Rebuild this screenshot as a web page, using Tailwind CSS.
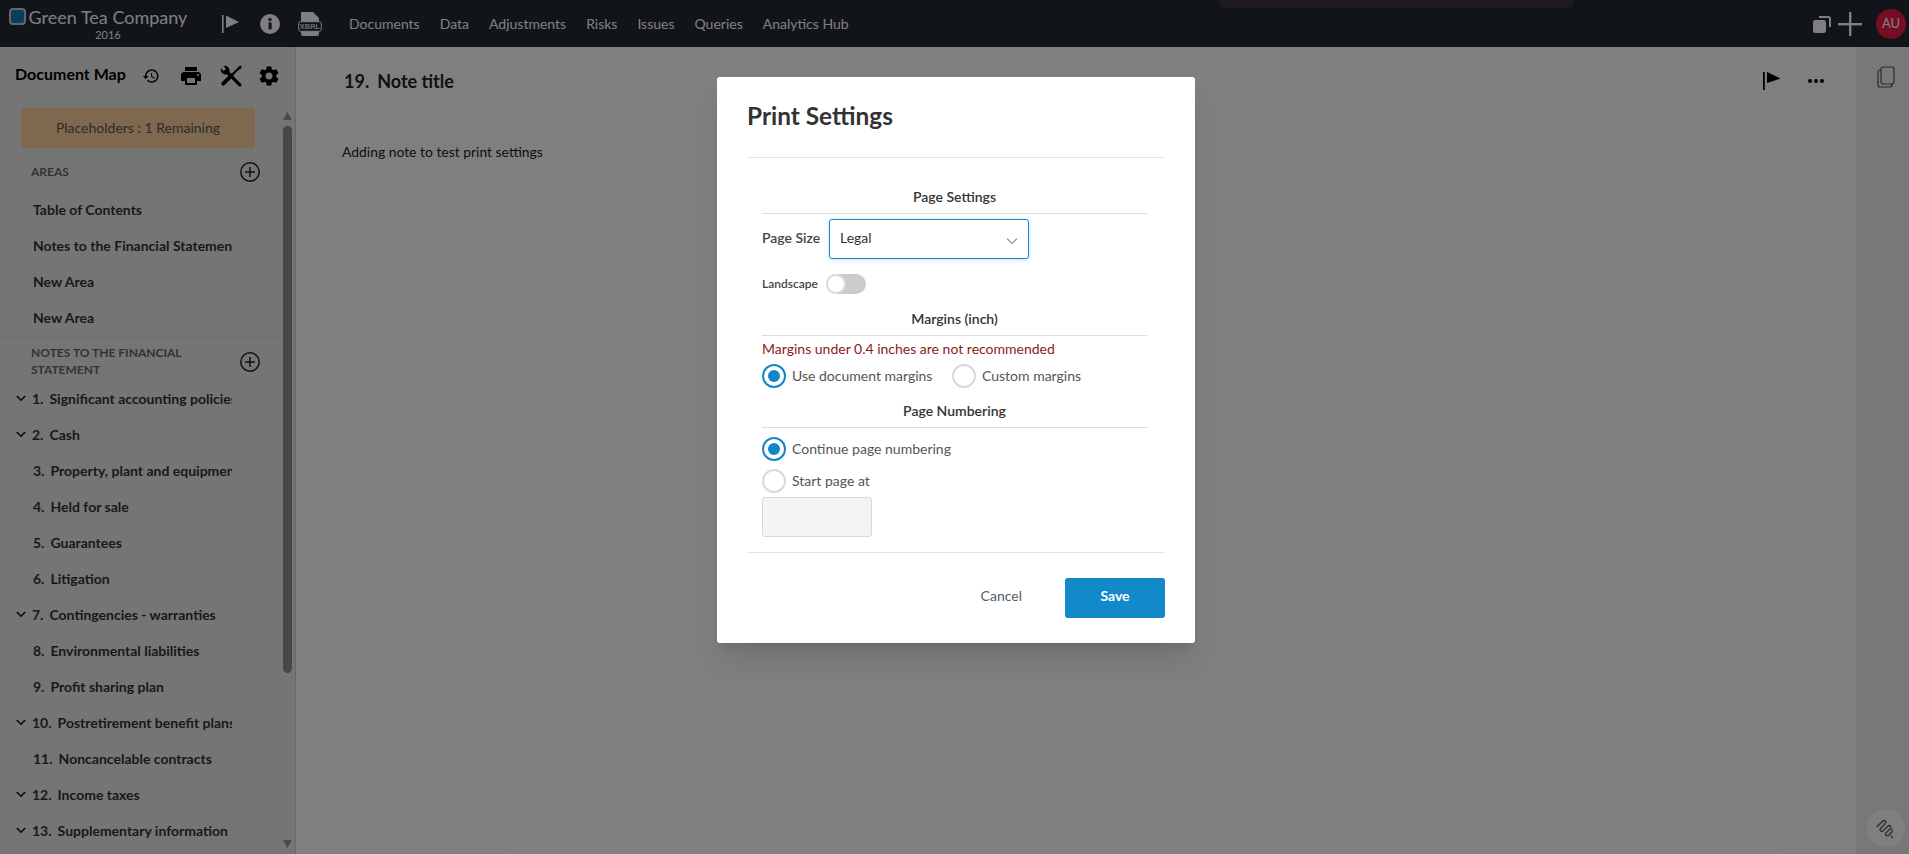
<!DOCTYPE html>
<html lang="en">
<head>
    <meta charset="UTF-8">
    <title>Print Settings</title>
    <script src="https://cdn.jsdelivr.net/npm/@tailwindcss/browser@4"></script>
</head>
<body class="relative h-[854px] w-full overflow-hidden bg-white font-[Lato,sans-serif] text-[#222]">
    <!-- Top bar -->
    <header class="flex h-[47px] items-center bg-[#222832] text-white">
        <div class="mt-2 ml-[9px] h-[17px] w-[17px] shrink-0 self-start rounded-[4px] border-2 border-[#c8ccd0] bg-[#0e80bc]"></div>
        <div class="mt-[7px] ml-[3px] flex w-[158px] shrink-0 flex-col items-center self-start">
            <span class="text-[18px] leading-[20px] whitespace-nowrap">Green Tea Company</span>
            <span class="mt-[2px] text-[11px] leading-[12px]">2016</span>
        </div>
        <svg class="ml-[34px] h-5 w-5" viewBox="0 0 20 20" fill="currentColor"><rect x="1" y="1" width="1.600" height="18"/><path d="M5 1.500 18 8 5 14z"/></svg>
        <svg class="ml-[19px] h-5 w-5" viewBox="0 0 20 20"><circle cx="10" cy="10" r="10" fill="#fff"/><rect x="8.600" y="8.400" width="3" height="7" fill="#222832"/><circle cx="10" cy="5.600" r="1.700" fill="#222832"/></svg>
        <svg class="ml-[18px] h-[26px] w-[24px]" viewBox="0 0 24 26"><path d="M3 1h12l6 6v4H3zM3 20h18v3a2 2 0 0 1-2 2H5a2 2 0 0 1-2-2z" fill="#fff"/><rect x="0.700" y="10.700" width="22.600" height="9.600" rx="2" fill="#222832" stroke="#fff" stroke-width="1"/><text x="12" y="18.200" text-anchor="middle" font-family="Liberation Sans" font-size="7.500" font-weight="700" fill="#cfe3f5">XBRL</text></svg>
        <nav class="ml-[27px] flex gap-[20px] text-[14px] whitespace-nowrap">
            <a>Documents</a><a>Data</a><a>Adjustments</a><a>Risks</a><a>Issues</a><a>Queries</a><a>Analytics Hub</a>
        </nav>
        <div class="ml-auto flex items-center">
            <svg class="h-[18px] w-[18px]" viewBox="0 0 18 18" fill="#fff"><rect x="0" y="5" width="13" height="13" rx="2.500"/><path d="M6 1h9a3 3 0 0 1 3 3v8h-2V4a1 1 0 0 0-1-1H6z"/></svg>
            <svg class="ml-[7px] h-[24px] w-[24px]" viewBox="0 0 24 24" fill="#fff"><rect x="11" y="0" width="2.400" height="24"/><rect x="0" y="11" width="24" height="2.400"/></svg>
            <div class="mr-[3px] ml-[14px] flex h-[30px] w-[30px] items-center justify-center rounded-full bg-[#e81c44] text-[13px]">AU</div>
        </div>
    </header>

    <div class="flex h-[807px]">
        <!-- Document map -->
        <aside class="flex w-[296px] shrink-0 flex-col border-r border-[#d0d0d0] bg-[#ebebeb]">
            <div class="flex h-[54px] items-center pl-[15px] text-black">
                <h2 class="w-[127px] text-[16px] font-bold whitespace-nowrap">Document Map</h2>
                <svg class="mt-[3px] h-[18px] w-[18px]" viewBox="0 0 24 24" fill="currentColor"><path d="M13 3c-4.970 0-9 4.030-9 9H1l3.890 3.890.07.140L9 12H6c0-3.870 3.130-7 7-7s7 3.130 7 7-3.130 7-7 7c-1.930 0-3.680-.79-4.940-2.060l-1.420 1.420C8.270 19.990 10.510 21 13 21c4.970 0 9-4.030 9-9s-4.030-9-9-9zm-1 5v5l4.280 2.540.72-1.210-3.500-2.080V8H12z"/></svg>
                <svg class="mt-[3px] ml-[19px] h-6 w-6" viewBox="0 0 24 24" fill="currentColor"><path d="M19 8H5c-1.660 0-3 1.340-3 3v6h4v4h12v-4h4v-6c0-1.660-1.340-3-3-3zm-3 11H8v-5h8v5zm3-7c-.55 0-1-.45-1-1s.45-1 1-1 1 .45 1 1-.45 1-1 1zm-1-9H6v4h12V3z"/></svg>
                <svg class="mt-[3px] ml-[17px] h-[22px] w-[22px]" viewBox="0 0 20 20" fill="none" stroke="currentColor" stroke-linecap="round"><path d="M.8 3 3.500 5.500 5.500 3.500 3 .8A4.600 4.600 0 0 1 8.500 6.500L6.500 8.500A4.600 4.600 0 0 1 .8 3z" fill="currentColor" stroke="none"/><path d="M6.500 6.500 18 18" stroke-width="3"/><path d="M10.500 9.500 3 17" stroke-width="3.600"/><path d="M10 10 17 3" stroke-width="2"/><path d="M16.500 1.500 19 .5l.5 1.500-1.500 2.500z" fill="currentColor" stroke="none"/></svg>
                <svg class="mt-[3px] ml-[15px] h-6 w-6" viewBox="0 0 24 24" fill="currentColor"><path d="M19.140 12.940c.04-.3.06-.61.06-.94 0-.32-.02-.64-.07-.94l2.030-1.580c.18-.14.23-.41.12-.61l-1.920-3.320c-.12-.22-.37-.29-.59-.22l-2.390.96c-.5-.38-1.030-.7-1.620-.94l-.36-2.540c-.04-.24-.24-.41-.48-.41h-3.840c-.24 0-.43.17-.47.41l-.36 2.540c-.59.24-1.130.57-1.620.94l-2.390-.96c-.22-.08-.47 0-.59.22L2.740 8.870c-.12.21-.08.47.12.61l2.030 1.580c-.05.3-.09.63-.09.94s.02.64.07.94l-2.030 1.580c-.18.14-.23.41-.12.61l1.920 3.320c.12.22.37.29.59.22l2.390-.96c.5.38 1.030.7 1.620.94l.36 2.540c.05.24.24.41.48.41h3.840c.24 0 .44-.17.47-.41l.36-2.540c.59-.24 1.130-.56 1.620-.94l2.390.96c.22.08.47 0 .59-.22l1.920-3.320c.12-.22.07-.47-.12-.61l-2.010-1.580zM12 15.600c-1.980 0-3.600-1.620-3.600-3.600s1.620-3.600 3.600-3.600 3.600 1.620 3.600 3.600-1.620 3.600-3.600 3.600z"/></svg>
            </div>
            <div class="flex min-h-0 flex-1">
                <div class="w-[283px] shrink-0">
                    <div class="mt-[7px] ml-[21px] flex h-10 w-[234px] items-center justify-center rounded-[3px] bg-[#ffd39d] pb-[2px] text-[14px] text-[#555]">Placeholders : 1 Remaining</div>
                    <div class="flex h-[43px] items-center justify-between pt-[5px] pr-[23px] pl-[31px]">
                        <span class="text-[12px] font-bold text-[#666]">AREAS</span>
                        <svg class="h-5 w-5" viewBox="0 0 20 20" fill="none" stroke="#222" stroke-width="1.500"><circle cx="10" cy="10" r="9.200"/><path d="M10 5v10M5 10h10"/></svg>
                    </div>
                    <div class="w-[232px] overflow-hidden pl-[33px] text-[14px] font-bold whitespace-nowrap text-[#333]">
                        <div class="flex h-9 items-center">Table of Contents</div>
                        <div class="flex h-9 items-center">Notes to the Financial Statements</div>
                        <div class="flex h-9 items-center">New Area</div>
                        <div class="flex h-9 items-center">New Area</div>
                    </div>
                    <div class="mt-[2px] flex h-[45px] items-center justify-between border-t border-[#d8d8d8] pt-[2px] pr-[23px] pl-[31px]">
                        <span class="w-[170px] text-[12px] leading-[17px] font-bold text-[#666]">NOTES TO THE FINANCIAL STATEMENT</span>
                        <svg class="mt-[2px] h-5 w-5" viewBox="0 0 20 20" fill="none" stroke="#222" stroke-width="1.500"><circle cx="10" cy="10" r="9.200"/><path d="M10 5v10M5 10h10"/></svg>
                    </div>
                    <ul class="-mt-[2px] w-[232px] overflow-hidden text-[14px] font-bold whitespace-nowrap text-[#333]">
                        <li class="flex h-9 items-center pl-4"><svg class="mr-[6px] h-[10px] w-[10px] shrink-0" viewBox="0 0 10 10" fill="none" stroke="#111" stroke-width="1.600"><path d="M.8 3l4.200 4.200L9.200 3"/></svg><span class="mr-[6px]">1.</span>Significant accounting policies</li>
                        <li class="flex h-9 items-center pl-4"><svg class="mr-[6px] h-[10px] w-[10px] shrink-0" viewBox="0 0 10 10" fill="none" stroke="#111" stroke-width="1.600"><path d="M.8 3l4.200 4.200L9.200 3"/></svg><span class="mr-[6px]">2.</span>Cash</li>
                        <li class="flex h-9 items-center pl-[33px]"><span class="mr-[6px]">3.</span>Property, plant and equipment</li>
                        <li class="flex h-9 items-center pl-[33px]"><span class="mr-[6px]">4.</span>Held for sale</li>
                        <li class="flex h-9 items-center pl-[33px]"><span class="mr-[6px]">5.</span>Guarantees</li>
                        <li class="flex h-9 items-center pl-[33px]"><span class="mr-[6px]">6.</span>Litigation</li>
                        <li class="flex h-9 items-center pl-4"><svg class="mr-[6px] h-[10px] w-[10px] shrink-0" viewBox="0 0 10 10" fill="none" stroke="#111" stroke-width="1.600"><path d="M.8 3l4.200 4.200L9.200 3"/></svg><span class="mr-[6px]">7.</span>Contingencies - warranties</li>
                        <li class="flex h-9 items-center pl-[33px]"><span class="mr-[6px]">8.</span>Environmental liabilities</li>
                        <li class="flex h-9 items-center pl-[33px]"><span class="mr-[6px]">9.</span>Profit sharing plan</li>
                        <li class="flex h-9 items-center pl-4"><svg class="mr-[6px] h-[10px] w-[10px] shrink-0" viewBox="0 0 10 10" fill="none" stroke="#111" stroke-width="1.600"><path d="M.8 3l4.200 4.200L9.200 3"/></svg><span class="mr-[6px]">10.</span>Postretirement benefit plans</li>
                        <li class="flex h-9 items-center pl-[33px]"><span class="mr-[6px]">11.</span>Noncancelable contracts</li>
                        <li class="flex h-9 items-center pl-4"><svg class="mr-[6px] h-[10px] w-[10px] shrink-0" viewBox="0 0 10 10" fill="none" stroke="#111" stroke-width="1.600"><path d="M.8 3l4.200 4.200L9.200 3"/></svg><span class="mr-[6px]">12.</span>Income taxes</li>
                        <li class="flex h-9 items-center pl-4"><svg class="mr-[6px] h-[10px] w-[10px] shrink-0" viewBox="0 0 10 10" fill="none" stroke="#111" stroke-width="1.600"><path d="M.8 3l4.200 4.200L9.200 3"/></svg><span class="mr-[6px]">13.</span>Supplementary information</li>
                    </ul>
                </div>
                <!-- scrollbar -->
                <div class="flex w-[9px] flex-col items-center">
                    <svg class="mt-[11px] h-2 w-[9px]" viewBox="0 0 9 8" fill="#999"><path d="M4.500 0 9 8H0z"/></svg>
                    <div class="mt-[6px] h-[547px] w-[9px] rounded-full bg-[#8e8e8e]"></div>
                    <svg class="mt-[167px] h-2 w-[9px]" viewBox="0 0 9 8" fill="#999"><path d="M0 0h9L4.500 8z"/></svg>
                </div>
            </div>
        </aside>

        <!-- Note -->
        <main class="flex-1 pr-[32px] pl-[46px]">
            <div class="flex h-[68px] items-center">
                <h1 class="ml-[2px] flex text-[18px] font-bold"><span class="mr-[8px]">19.</span>Note title</h1>
                <svg class="ml-auto h-5 w-5" viewBox="0 0 20 20" fill="#000"><rect x="1" y="1" width="1.800" height="18"/><path d="M5 1 18.500 7.500 5 12z"/></svg>
                <div class="ml-[26px] flex gap-[2px]">
                    <span class="h-1 w-1 rounded-full bg-black"></span><span class="h-1 w-1 rounded-full bg-black"></span><span class="h-1 w-1 rounded-full bg-black"></span>
                </div>
            </div>
            <p class="mt-[27px] text-[13.900px]">Adding note to test print settings</p>
        </main>

        <!-- Right rail -->
        <div class="w-[53px] shrink-0 bg-[#f0f0f0]">
            <svg class="mt-[19px] ml-[21px] h-[22px] w-[18px]" viewBox="0 0 18 22" fill="none" stroke="#555" stroke-width="1.200"><rect x="4" y="1" width="13" height="17" rx="2.500"/><path d="M4 4H3a2 2 0 0 0-2 2v13a2 2 0 0 0 2 2h10a2 2 0 0 0 2-2v-1"/></svg>
        </div>
    </div>

    <!-- Notification behind the overlay -->
    <div class="absolute top-0 left-[1220px] h-2 w-[354px] rounded-b-[6px] bg-[#3c363f] shadow-lg"></div>
    <!-- Floating help button -->
    <div class="absolute top-[809px] left-[1867px] flex h-[38px] w-[38px] items-center justify-center rounded-full bg-white">
        <svg class="h-6 w-6" viewBox="0 0 24 24" fill="none" stroke="#555" stroke-width="1.300" stroke-linecap="round" stroke-linejoin="round"><path d="M3 10.500 9 5a1.700 1.700 0 0 1 2.400 2.400L6.500 12.500a1.700 1.700 0 0 0 2.400 2.400L14 10a1.700 1.700 0 0 1 2.400 2.400L12 17a1.700 1.700 0 0 0 2.400 2.400l3.500-3.400a1.500 1.500 0 0 0-.4-2.500M17 20l1.500 1.500"/></svg>
    </div>

    <!-- Modal overlay -->
    <div class="absolute inset-0 flex justify-center bg-black/50 pt-[77px]">
        <div class="ml-[3px] h-[566px] w-[478px] rounded-[3px] bg-white px-[30px] text-[14px] text-[#333] shadow-xl">
            <div class="flex h-[81px] items-start border-b border-[#e2e2e2] pt-[23px]">
                <h3 class="text-[24.400px] leading-[32px] font-bold">Print Settings</h3>
            </div>
            <div class="pr-[18px] pl-[15px]">
                <h4 class="mt-[29px] border-b border-[#dcdcdc] pb-[6px] text-center leading-[20px] font-semibold">Page Settings</h4>
                <div class="mt-[5px] flex items-center">
                    <label class="w-[67px] pb-[3px] font-semibold text-[#444]">Page Size</label>
                    <div class="flex h-10 w-[200px] items-center justify-between rounded-[3px] border border-[#1186c8] pr-[10px] pb-[3px] pl-[10px] shadow-[0_1px_4px_rgba(17,134,200,0.25)]">
                        <span>Legal</span>
                        <svg class="mt-[6px] h-[10px] w-[12px]" viewBox="0 0 12 10" fill="none" stroke="#999" stroke-width="1.200"><path d="M1 2.500l5 5 5-5"/></svg>
                    </div>
                </div>
                <div class="mt-[15px] flex h-5 items-center">
                    <span class="w-[64px] pb-px text-[12px] font-semibold text-[#444]">Landscape</span>
                    <span class="flex h-5 w-10 items-center rounded-full bg-[#cccccc]"><span class="h-5 w-5 rounded-full border-2 border-[#dddddd] bg-white"></span></span>
                </div>
                <h4 class="mt-[15px] border-b border-[#dcdcdc] pb-[6px] text-center leading-[20px] font-semibold">Margins (inch)</h4>
                <p class="mt-[3px] leading-[20px] text-[#8a1c1c]">Margins under 0.4 inches are not recommended</p>
                <div class="mt-[5px] flex h-6 items-center">
                    <span class="flex h-6 w-6 items-center justify-center rounded-full border-2 border-[#1186c8]"><span class="h-3 w-3 rounded-full bg-[#1186c8]"></span></span>
                    <span class="ml-[6px] w-[160px] pb-[2px] text-[#555]">Use document margins</span>
                    <span class="h-6 w-6 rounded-full border-2 border-[#d5dae0]"></span>
                    <span class="ml-[6px] pb-[2px] text-[#555]">Custom margins</span>
                </div>
                <h4 class="mt-[13px] border-b border-[#dcdcdc] pb-[6px] text-center leading-[20px] font-semibold">Page Numbering</h4>
                <div class="mt-[9px] flex h-6 items-center">
                    <span class="flex h-6 w-6 items-center justify-center rounded-full border-2 border-[#1186c8]"><span class="h-3 w-3 rounded-full bg-[#1186c8]"></span></span>
                    <span class="ml-[6px] pb-[2px] text-[#555]">Continue page numbering</span>
                </div>
                <div class="mt-[8px] flex h-6 items-center">
                    <span class="h-6 w-6 rounded-full border-2 border-[#d5dae0]"></span>
                    <span class="ml-[6px] pb-[2px] text-[#555]">Start page at</span>
                </div>
                <div class="mt-[4px] h-10 w-[110px] rounded-[3px] border border-[#d5d8dc] bg-[#f4f4f4]"></div>
            </div>
            <div class="mt-[15px] flex items-center justify-end border-t border-[#e2e2e2] pt-[25px]">
                <button class="mr-[43px] pb-[6px] text-[#55606a]">Cancel</button>
                <button class="h-10 w-[100px] rounded-[3px] bg-[#1289c9] pb-[6px] font-bold text-white">Save</button>
            </div>
        </div>
    </div>
</body>
</html>
